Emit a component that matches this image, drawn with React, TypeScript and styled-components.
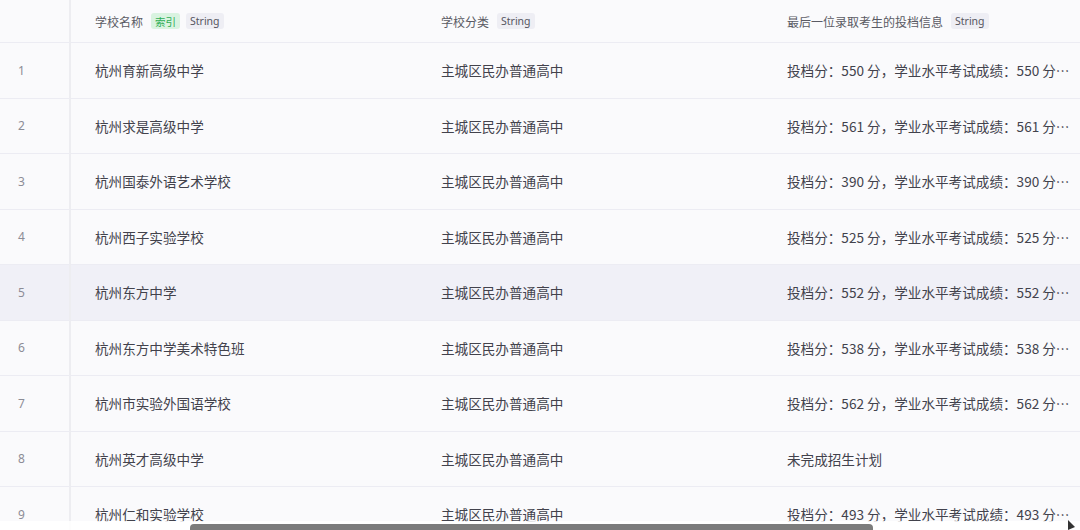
import React from "react";
import styled, { createGlobalStyle } from "styled-components";

const Global = createGlobalStyle`
  html, body { margin: 0; padding: 0; background: #fafafc; }
  body { font-family: "Noto Sans", "Noto Sans CJK SC", sans-serif; overflow: hidden; }
`;

const Page = styled.div`
  position: relative;
  width: 1080px;
  height: 530px;
  overflow: hidden;
  background: #fafafc;
`;

const Table = styled.div`
  display: grid;
  grid-template-columns: 71px 346px 346px 317px;
  width: 1080px;
`;

const Row = styled.div<{ $header?: boolean; $active?: boolean }>`
  display: contents;
  & > div {
    height: ${(p) => (p.$header ? "43px" : "55.5px")};
    background: ${(p) => (p.$active ? "#f0f0f7" : "#fafafc")};
    border-bottom: 1px solid #ececf3;
  }
`;

const Cell = styled.div`
  box-sizing: border-box;
  display: flex;
  align-items: center;
  padding-left: 24px;
  font-size: 13.6px;
  color: #42424c;
  font-family: "Noto Sans CJK SC", "Noto Sans", sans-serif;
  min-width: 0;
  white-space: nowrap;
`;

const IndexCell = styled(Cell)`
  padding-left: 18px;
  font-size: 12px;
  color: #8c8c96;
  font-family: "Noto Sans", sans-serif;
  border-right: 2px solid #ededf1;
`;

const HeaderCell = styled(Cell)`
  font-size: 12px;
  color: #5a5a64;
  gap: 8px;
`;

const Tag = styled.span<{ $green?: boolean }>`
  display: inline-flex;
  align-items: center;
  height: 16px;
  padding: 0 4px;
  border-radius: 3px;
  font-size: 10.5px;
  font-family: "Noto Sans", "Noto Sans CJK SC", sans-serif;
  background: ${(p) => (p.$green ? "#d9f3e0" : "#eeeef4")};
  color: ${(p) => (p.$green ? "#2fae55" : "#55555f")};
`;

const TagGroup = styled.span`
  display: inline-flex;
  gap: 6px;
`;

const Track = styled.div`
  position: absolute;
  left: 0;
  right: 0;
  bottom: 0;
  height: 9px;
  background: rgba(255, 255, 255, 0.85);
`;

const Thumb = styled.div`
  position: absolute;
  left: 190px;
  width: 683px;
  bottom: 0;
  height: 6px;
  border-radius: 4px 4px 0 0;
  background: #7c7c7c;
`;

const Cursor = styled.svg`
  position: absolute;
  left: 1066px;
  bottom: 0;
`;

const rows: [string, string][] = [
  ["杭州育新高级中学", "投档分：550 分，学业水平考试成绩：550 分…"],
  ["杭州求是高级中学", "投档分：561 分，学业水平考试成绩：561 分…"],
  ["杭州国泰外语艺术学校", "投档分：390 分，学业水平考试成绩：390 分…"],
  ["杭州西子实验学校", "投档分：525 分，学业水平考试成绩：525 分…"],
  ["杭州东方中学", "投档分：552 分，学业水平考试成绩：552 分…"],
  ["杭州东方中学美术特色班", "投档分：538 分，学业水平考试成绩：538 分…"],
  ["杭州市实验外国语学校", "投档分：562 分，学业水平考试成绩：562 分…"],
  ["杭州英才高级中学", "未完成招生计划"],
  ["杭州仁和实验学校", "投档分：493 分，学业水平考试成绩：493 分…"],
];

export default function App() {
  return (
    <Page>
      <Global />
      <Table>
        <Row $header>
          <IndexCell />
          <HeaderCell>
            学校名称
            <TagGroup>
              <Tag $green>索引</Tag>
              <Tag>String</Tag>
            </TagGroup>
          </HeaderCell>
          <HeaderCell>
            学校分类<Tag>String</Tag>
          </HeaderCell>
          <HeaderCell>
            最后一位录取考生的投档信息<Tag>String</Tag>
          </HeaderCell>
        </Row>
        {rows.map(([name, info], i) => (
          <Row key={i} $active={i === 4}>
            <IndexCell>{i + 1}</IndexCell>
            <Cell>{name}</Cell>
            <Cell>主城区民办普通高中</Cell>
            <Cell>{info}</Cell>
          </Row>
        ))}
      </Table>
      <Track />
      <Thumb />
      <Cursor width="10" height="10" viewBox="0 0 10 10">
        <path d="M2 0 L9 7 L2 10 Z" fill="#333" />
      </Cursor>
    </Page>
  );
}
